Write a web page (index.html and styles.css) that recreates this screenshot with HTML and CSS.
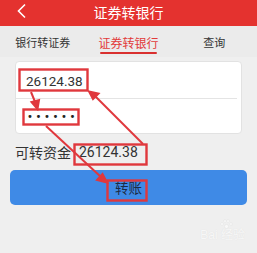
FILE: index.html
```html
<!DOCTYPE html>
<html lang="zh">
<head>
<meta charset="utf-8">
<link rel="stylesheet" href="styles.css">
</head>
<body>
<div class="page">
  <header class="topbar">
    <svg class="back" width="12" height="16" viewBox="0 0 12 16"><path d="M9 1.5 L2.5 8 L9 14.5" fill="none" stroke="#fff" stroke-width="1.6"/></svg>
    <div class="title">证券转银行</div>
  </header>
  <nav class="tabs">
    <div class="tab">银行转证券</div>
    <div class="tab active">证券转银行</div>
    <div class="tab">查询</div>
  </nav>
  <section class="card">
    <div class="row row-amount"><span class="amount">26124.38</span></div>
    <div class="row row-pass"><span class="dots">••••••</span><span class="cursor"></span></div>
  </section>
  <div class="avail"><span class="label">可转资金</span><span class="num">26124.38</span></div>
  <button class="btn">转账</button>
  <div class="watermark">
    <svg class="paw" width="14" height="10" viewBox="0 0 14 10"><g fill="#f8f8f8" stroke="#e2e2e2" stroke-width="0.5"><circle cx="3" cy="5" r="1.5"/><circle cx="6" cy="2" r="1.5"/><circle cx="9" cy="2" r="1.5"/><circle cx="12" cy="5" r="1.5"/><circle cx="7.5" cy="7.5" r="2"/></g></svg>
    <span class="wm-text">Bai 经验</span>
  </div>

  <svg class="notes" width="257" height="253" viewBox="0 0 257 253">
    <g fill="none" stroke="#e0383d" stroke-width="2.4">
      <rect x="19.5" y="69.5" width="68" height="21"/>
      <rect x="23.5" y="109.5" width="55" height="15"/>
      <rect x="74.5" y="144.5" width="72" height="20"/>
      <rect x="107.5" y="180.5" width="39" height="20"/>
    </g>
    <g stroke="#e0383d" stroke-width="2" fill="#e0383d">
      <line x1="31" y1="92" x2="35.5" y2="103"/>
      <polygon points="37.5,109 31.5,102 39,100"/>
      <line x1="143" y1="144" x2="95" y2="96"/>
      <polygon points="89,91.5 98.5,93.5 93,99"/>
      <line x1="46" y1="126" x2="101" y2="177"/>
      <polygon points="107,182.5 97,180 102.5,174"/>
    </g>
  </svg>
</div>
</body>
</html>
```
FILE: styles.css
```css
* { box-sizing: border-box; margin: 0; padding: 0; }
html, body { width: 257px; height: 253px; overflow: hidden; }
body { background: #efefef; font-family: Roboto, "Noto Sans CJK SC", sans-serif; }
.page { position: relative; width: 257px; height: 253px; display: flex; flex-direction: column; }
.topbar { height: 26px; background: #e4322f; display: flex; align-items: center; justify-content: center; position: relative; }
.back { position: absolute; left: 16px; top: 3px; }
.title { color: #fff; font-size: 14px; line-height: 14px; font-family: "Noto Sans CJK SC", sans-serif; margin-top: -3px; }
.tabs { height: 31px; background: #ebebeb; display: grid; grid-template-columns: 1fr 1fr 1fr; }
.tab { display: flex; align-items: center; justify-content: center; font-size: 11px; color: #333; font-family: "Noto Sans CJK SC", sans-serif; position: relative; padding-top: 1px; }
.tab.active { color: #e23a3a; font-size: 12px; }
.tab.active::after { content: ""; position: absolute; left: 14px; right: 14px; bottom: 3px; height: 2px; background: #d9302f; border-radius: 1px; }
.card { margin: 4px 15px 0 15px; height: 73px; background: #fff; border: 1px solid #e2e2e2; border-radius: 4px; display: flex; flex-direction: column; }
.row { display: flex; align-items: center; padding-left: 10px; }
.row-amount { height: 37px; border-bottom: 1px solid #e4e4e4; margin-right: 4px; }
.amount { font-size: 13.5px; color: #333; padding-top: 1px; }
.row-pass { flex: 1; padding-left: 11px; }
.dots { font-size: 10px; letter-spacing: 2.6px; color: #222; font-family: "DejaVu Sans", sans-serif; }
.cursor { width: 1px; height: 11px; background: #555; margin-left: 0; }
.avail { height: 36px; display: flex; align-items: center; padding-left: 15px; padding-bottom: 1px; }
.label { font-size: 14px; color: #333; font-family: "Noto Sans CJK SC", sans-serif; }
.num { font-size: 14px; color: #333; margin-left: 8px; }
.btn { margin: 0 10px; height: 35px; border: none; border-radius: 5px; background: #3f8ae6; color: #1d2a44; font-size: 13.5px; font-family: "Noto Sans CJK SC", sans-serif; display: flex; align-items: center; justify-content: center; padding-bottom: 1px; }
.watermark { margin: 14px 12px 0 auto; display: flex; flex-direction: column; align-items: center; }
.paw { display: block; margin-left: 6px; }
.wm-text { color: #f7f7f7; font-size: 12px; line-height: 13px; font-family: "Liberation Sans", "Noto Sans CJK SC", sans-serif; text-shadow: 0 0 1px #dcdcdc; }
.notes { position: absolute; left: 0; top: 0; pointer-events: none; }
```
